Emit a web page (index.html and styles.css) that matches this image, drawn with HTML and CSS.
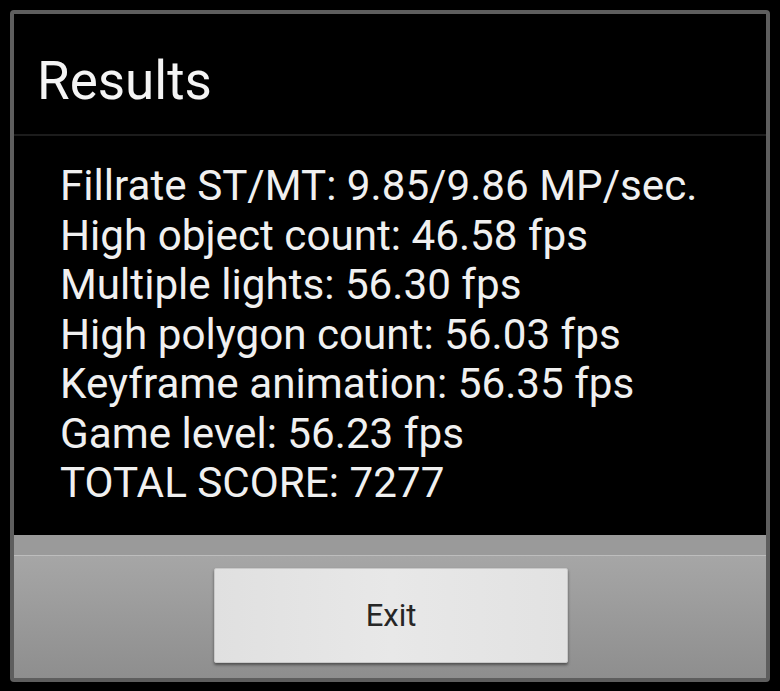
FILE: index.html
```html
<!DOCTYPE html>
<html lang="en">
<head>
    <meta charset="UTF-8">
    <meta name="viewport" content="width=device-width, initial-scale=1.0">
    <title>Results</title>
    <link rel="stylesheet" href="styles.css">
</head>
<body>
    <div class="dialog">
        <div class="dialog-header">
            <h1>Results</h1>
        </div>
        <div class="dialog-body">
            <p>Fillrate ST/MT: 9.85/9.86 MP/sec.</p>
            <p>High object count: 46.58 fps</p>
            <p>Multiple lights: 56.30 fps</p>
            <p>High polygon count: 56.03 fps</p>
            <p>Keyframe animation: 56.35 fps</p>
            <p>Game level: 56.23 fps</p>
            <p>TOTAL SCORE: 7277</p>
        </div>
        <div class="dialog-footer">
            <div class="footer-band"></div>
            <div class="footer-buttons">
                <button class="exit-button">Exit</button>
            </div>
        </div>
    </div>
</body>
</html>
```

FILE: styles.css
```css
body {
    margin: 0;
    background-color: #000;
    font-family: Roboto, "Liberation Sans", sans-serif;
    height: 691px;
    overflow: hidden;
}
.dialog {
    margin: 10px;
    width: 752px;
    height: 664px;
    border: 4px solid #5e5e5e;
    border-radius: 4px;
    background-color: #000;
    display: flex;
    flex-direction: column;
    overflow: hidden;
}
.dialog-header {
    height: 122px;
    border-bottom: 2px solid #1c1c1c;
    padding-left: 23px;
    box-sizing: border-box;
}
.dialog-header h1 {
    margin: 0;
    padding-top: 41px;
    font-size: 53px;
    font-weight: 400;
    line-height: 53px;
    color: #f4f4f4;
}
.dialog-body {
    height: 399px;
    box-sizing: border-box;
    padding: 25px 0 0 46px;
}
.dialog-body p {
    margin: 0;
    font-size: 42.2px;
    line-height: 49.5px;
    color: #f0f0f0;
}
.dialog-footer {
    flex: 1;
    display: flex;
    flex-direction: column;
}
.footer-band {
    height: 20px;
    background-color: #9a9a9a;
    border-bottom: 1px solid #bdbdbd;
}
.footer-buttons {
    flex: 1;
    background: linear-gradient(#a6a6a6, #8e8e8e);
    display: flex;
    justify-content: center;
    padding-top: 12px;
    box-sizing: border-box;
}
.exit-button {
    width: 354px;
    height: 95px;
    margin-left: 2px;
    border: 1px solid #c8c8c8;
    border-radius: 2px;
    background: linear-gradient(90deg, #e0e0e0, #e8e8e8 50%, #e2e2e2);
    box-shadow: 0 2px 3px rgba(0, 0, 0, 0.45);
    font-family: Roboto, "Liberation Sans", sans-serif;
    font-size: 31px;
    color: #262626;
    padding: 0;
}
```
